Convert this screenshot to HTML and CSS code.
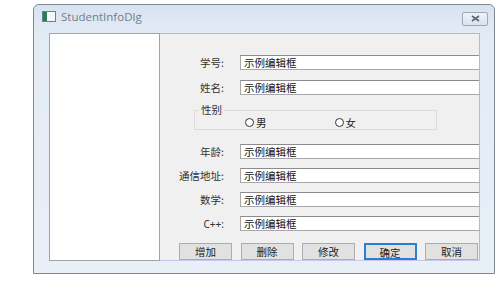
FILE: index.html
```html
<!DOCTYPE html>
<html lang="zh">
<head>
    <meta charset="UTF-8">
    <title>StudentInfoDlg</title>
    <link rel="stylesheet" href="styles.css">
</head>
<body>
    <div class="screen">
        <div class="window">
            <div class="titlebar">
                <span class="app-icon"><span class="app-icon-mark"></span></span>
                <span class="title">StudentInfoDlg</span>
                <span class="close-btn">
                    <svg width="9" height="7" viewBox="0 0 9 7"><path d="M1 1 L8 6 M8 1 L1 6" stroke="#5a6878" stroke-width="1.6"/></svg>
                </span>
            </div>
            <div class="frame">
                <div class="client">
                    <div class="list-panel"></div>
                    <div class="form-panel">
                        <div class="row first">
                            <label>学号:</label>
                            <div class="edit">示例编辑框</div>
                        </div>
                        <div class="row">
                            <label>姓名:</label>
                            <div class="edit">示例编辑框</div>
                        </div>
                        <fieldset class="group">
                            <legend>性别</legend>
                            <div class="radios">
                                <span class="radio"><span class="dot"></span>男</span>
                                <span class="radio"><span class="dot"></span>女</span>
                            </div>
                        </fieldset>
                        <div class="row after-group">
                            <label>年龄:</label>
                            <div class="edit">示例编辑框</div>
                        </div>
                        <div class="row small-gap">
                            <label>通信地址:</label>
                            <div class="edit">示例编辑框</div>
                        </div>
                        <div class="row small-gap">
                            <label>数学:</label>
                            <div class="edit">示例编辑框</div>
                        </div>
                        <div class="row small-gap">
                            <label class="latin">C++:</label>
                            <div class="edit">示例编辑框</div>
                        </div>
                        <div class="buttons">
                            <button>增加</button>
                            <button>删除</button>
                            <button>修改</button>
                            <button class="default">确定</button>
                            <button>取消</button>
                        </div>
                    </div>
                </div>
            </div>
        </div>
    </div>
</body>
</html>
```

FILE: styles.css
```css
body {
    margin: 0;
    background-color: #ffffff;
    font-family: "Noto Sans CJK SC", "Noto Sans", sans-serif;
    font-size: 11px;
    color: #222222;
}
.screen {
    padding: 4px 0 0 33px;
}
.window {
    width: 462px;
    height: 270px;
    box-sizing: border-box;
    border: 1px solid #7f8894;
    border-radius: 6px 6px 0 0;
    background: linear-gradient(#d8e3f0, #e3ebf5 30px, #e9eff7);
}
.titlebar {
    height: 22px;
    display: flex;
    align-items: center;
    padding: 0 6px 0 8px;
}
.app-icon {
    width: 12px;
    height: 9px;
    border: 1px solid #6d7f92;
    background-color: #f4f7fb;
    margin-right: 5px;
    display: flex;
}
.app-icon-mark {
    width: 4px;
    background-color: #2f7a5a;
}
.title {
    font-family: "Open Sans", "Noto Sans", sans-serif;
    font-size: 11.5px;
    color: #6f7e8e;
    flex: 1;
}
.close-btn {
    width: 24px;
    height: 12px;
    border: 1px solid #9ca8b6;
    border-radius: 2px;
    background: linear-gradient(#eef3f9, #d9e2ec);
    display: flex;
    align-items: center;
    justify-content: center;
    margin-top: 5px;
}
.frame {
    padding: 6px 14px 12px 15px;
}
.client {
    display: flex;
    height: 228px;
}
.list-panel {
    width: 111px;
    box-sizing: border-box;
    border: 1px solid #a3a3a3;
    background-color: #ffffff;
}
.form-panel {
    width: 320px;
    box-sizing: border-box;
    background-color: #f0f0f0;
    border-top: 1px solid #b8b3e6;
    border-right: 1px solid #b8b3e6;
    border-bottom: 1px solid #c9c6ea;
    padding-top: 21px;
}
.row {
    display: flex;
    align-items: center;
    height: 15px;
    margin-top: 10px;
}
.row.first {
    margin-top: 0;
}
.row.after-group {
    margin-top: 14px;
}
.row.small-gap {
    margin-top: 9px;
}
.row label {
    width: 64px;
    padding-right: 16px;
    text-align: right;
    font-size: 10.5px;
    color: #333333;
}
.row label.latin {
    font-family: "Noto Sans", sans-serif;
    font-size: 10px;
}
.edit {
    width: 239px;
    height: 15px;
    box-sizing: border-box;
    background-color: #ffffff;
    border: 1px solid #a8a8a8;
    border-top-color: #8c8c8c;
    border-right: none;
    padding-left: 3px;
    line-height: 13px;
    font-size: 10.5px;
    color: #111111;
}
.group {
    margin: 8px 0 0 34px;
    padding: 0;
    width: 243px;
    box-sizing: border-box;
    height: 27px;
    border: 1px solid #dcdcdc;
}
.group legend {
    margin-left: 4px;
    padding: 0 2px;
    line-height: 14px;
    font-size: 10.5px;
    color: #333333;
}
.radios {
    display: flex;
    gap: 68px;
    padding-left: 50px;
    margin-top: -2px;
}
.radio {
    display: flex;
    align-items: center;
    font-size: 10.5px;
}
.dot {
    width: 9px;
    height: 9px;
    box-sizing: border-box;
    border: 1px solid #333333;
    border-radius: 50%;
    background-color: #ffffff;
    margin-right: 2px;
}
.buttons {
    display: flex;
    gap: 8.5px;
    padding-left: 19px;
    margin-top: 12px;
}
button {
    width: 53px;
    height: 17px;
    padding: 0;
    background-color: #e1e1e1;
    border: 1px solid #adadad;
    font-family: "Noto Sans CJK SC", sans-serif;
    font-size: 10.5px;
    color: #222222;
}
button.default {
    border: 2px solid #2a7fd4;
}
```
